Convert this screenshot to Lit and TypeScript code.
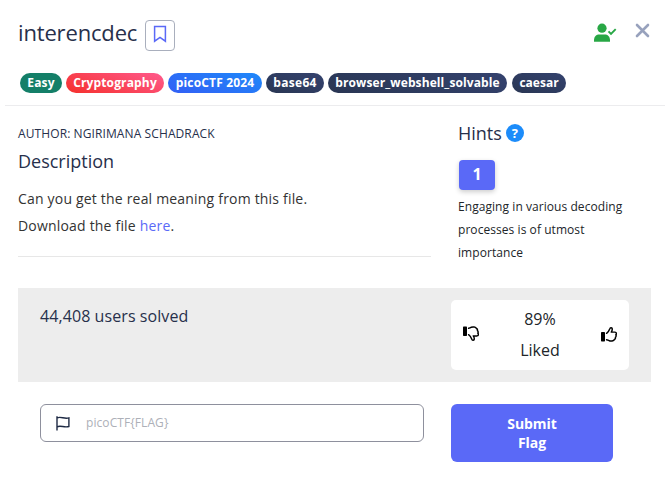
import { LitElement, html, css, svg } from "lit";
import { customElement } from "lit/decorators.js";

const TAGS = [
  { label: "Easy", kind: "easy" },
  { label: "Cryptography", kind: "crypto" },
  { label: "picoCTF 2024", kind: "event" },
  { label: "base64", kind: "plain num6" },
  { label: "browser_webshell_solvable", kind: "plain long" },
  { label: "caesar", kind: "plain short" },
];

const thumb = svg`
  <rect x="0" y="5" width="4" height="9.500" rx="0.7" fill="#000"/>
  <path d="M5.600 6.300 C7.100 5.300 8 3.700 8.700 1.900 C9.200 .3 11.200 .5 11.300 2.100 C11.300 3.400 10.800 4.300 10.300 5.100 H14 C15.700 5.200 15.700 7.200 14.800 7.800 C15.500 8.700 15.100 9.800 14.400 10.300 C14.700 11.400 14.100 12.200 13.400 12.500 C13 14.200 9.500 14.200 8.200 13.700 C7.200 13.400 6.500 12.900 5.600 12.700"
    fill="none" stroke="#000" stroke-width="1.45" stroke-linecap="round" stroke-linejoin="round"/>`;

@customElement("app-root")
export class AppRoot extends LitElement {
  static styles = css`
    :host { display: block; width: 670px; height: 482px; overflow: hidden; background: #fff;
      font-family: "Open Sans", "Noto Sans", sans-serif; color: #27304b; }
    * { box-sizing: border-box; }
    svg { display: block; flex: none; }
    header { margin: 0 5px; height: 106px; padding: 20px 15px 0 13px; border-bottom: 1px solid #ececee; }
    .top { display: flex; height: 31px; }
    .title { font-size: 22px; letter-spacing: -0.16px; line-height: 24px; width: 127px; white-space: nowrap; }
    .mark { width: 30px; height: 31px; border: 1px solid #a9afbd; border-radius: 4px; display: grid;
      place-items: center; padding: 0 0 3px; background: #fff; }
    .user { margin: 3px 0 0 auto; }
    .close { margin: 3px 0 0 18px; }
    .tags { display: flex; gap: 4px; margin: 22px 0 0 2px; }
    .tag { height: 20px; border-radius: 10px; color: #fff; font-weight: 700; text-align: center;
      font-size: 12px; line-height: 19px; white-space: nowrap; letter-spacing: 0.15px; }
    .easy { width: 42px; background: #147f68; }
    .crypto { width: 98px; background: linear-gradient(20deg, #f5302c, #ff5a8d); }
    .event { width: 94px; background: linear-gradient(20deg, #335ff5, #1e88f9); }
    .plain { background: linear-gradient(20deg, #293653, #34426e); }
    .num6 { width: 58px; letter-spacing: 0.3px; }
    .long { width: 179px; margin-right: 1px; letter-spacing: 0.1px; }
    .short { width: 54px; letter-spacing: 0; }
    .body { display: grid; grid-template-columns: 413px 178px; column-gap: 27px; padding-left: 18px; height: 182px; }
    .author { margin-top: 19px; font-size: 12px; line-height: 18px; white-space: nowrap; letter-spacing: 0.1px; }
    .h { font-size: 18px; line-height: 24px; }
    .desc { margin-top: 6px; }
    .text { margin-top: 12px; padding-bottom: 17px; border-bottom: 1px solid #e7e7e7; font-size: 14px;
      line-height: 27px; color: #333; letter-spacing: 0.19px; }
    a { color: #5a69f7; text-decoration: none; }
    .hints { display: flex; align-items: center; gap: 4px; margin-top: 15px; }
    .help { width: 18px; height: 18px; border-radius: 50%; background: #1c8cfa; color: #fff; font-weight: 700;
      font-size: 13px; line-height: 18px; text-align: center; }
    .num { width: 36px; height: 30px; margin: 15px 0 0 1px; border-radius: 4px; background: #5a69f7; color: #fff;
      font-weight: 700; font-size: 16px; line-height: 29px; text-align: center; box-shadow: 0 2px 5px #0003; }
    .hint { margin-top: 5px; font-size: 12px; line-height: 23px; color: #212529; letter-spacing: 0.06px; }
    .solved { margin: 0 19px 0 18px; height: 94px; background: #ededed; padding: 12px 22px; display: flex;
      justify-content: space-between; font-size: 16px; }
    .count { line-height: 32px; letter-spacing: 0.08px; }
    .rating { width: 178px; height: 70px; border-radius: 5px; background: #fff; display: flex;
      align-items: center; justify-content: space-between; padding: 0 12px; color: #212529; }
    .pct { text-align: center; line-height: 31px; }
    .up { margin-top: -2px; }
    .down { transform: scaleY(-1); margin-top: -4px; }
    .form { display: flex; gap: 27px; padding: 22px 0 0 40px; align-items: flex-start; }
    .field { width: 384px; height: 38px; border: 1px solid #8e909d; border-radius: 6px; display: flex;
      align-items: center; padding-left: 15px; gap: 16px; font-size: 12px; color: #adb0b8; }
    .ph { line-height: 16px; padding-bottom: 1px; letter-spacing: 0.08px; }
    .submit { width: 162px; height: 58px; border: 0; border-radius: 6px; background: #5a69f7; color: #fff;
      font: 700 14px/19px "Open Sans", sans-serif; padding: 0 50px; letter-spacing: -0.1px; }
  `;

  render() {
    return html`
      <header>
        <div class="top">
          <div class="title">interencdec</div>
          <div class="mark">
            <svg width="14" height="18" viewBox="0 0 14 18"><path d="M1.600 1.600h10.800v14.600L7 12.400l-5.400 3.800z" fill="none" stroke="#5a69f7" stroke-width="1.5"/></svg>
          </div>
          <svg class="user" width="23" height="19" viewBox="0 0 23 19">
            <circle cx="8" cy="5.2" r="4.6" fill="#28a745"/>
            <path d="M0 18.800v-1.600c0-3.800 2.300-5.800 5.400-5.800h5.200c3.100 0 5.400 2 5.400 5.800v1.600z" fill="#28a745"/>
            <path d="M14.500 8.400l2.500 2.600 4.700-4.900" fill="none" stroke="#28a745" stroke-width="1.9"/>
          </svg>
          <svg class="close" width="15" height="15" viewBox="0 0 15 15"><path d="M2 2l11 11M13 2L2 13" stroke="#98a2bd" stroke-width="2.6" stroke-linecap="round"/></svg>
        </div>
        <div class="tags">${TAGS.map((t) => html`<span class="tag ${t.kind}">${t.label}</span>`)}</div>
      </header>
      <section class="body">
        <div>
          <div class="author">AUTHOR: NGIRIMANA SCHADRACK</div>
          <div class="h desc">Description</div>
          <div class="text">Can you get the real meaning from this file.<br />Download the file <a>here</a>.</div>
        </div>
        <div>
          <div class="h hints">Hints <span class="help">?</span></div>
          <div class="num">1</div>
          <div class="hint">Engaging in various decoding processes is of utmost importance</div>
        </div>
      </section>
      <section class="solved">
        <div class="count">44,408 users solved</div>
        <div class="rating">
          <svg class="down" width="16" height="15" viewBox="0 0 16 15">${thumb}</svg>
          <div class="pct">89%<br />Liked</div>
          <svg class="up" width="16" height="15" viewBox="0 0 16 15">${thumb}</svg>
        </div>
      </section>
      <section class="form">
        <div class="field">
          <svg width="14" height="15" viewBox="0 0 14 15"><path d="M1 .3v14.200M1 1.900c4-1.800 7 1.400 11.900 0v8.600C8 12 5 8.900 1 10.800" fill="none" stroke="#1e2a44" stroke-width="1.4"/></svg>
          <span class="ph">picoCTF{FLAG}</span>
        </div>
        <button class="submit">Submit Flag</button>
      </section>
    `;
  }
}
